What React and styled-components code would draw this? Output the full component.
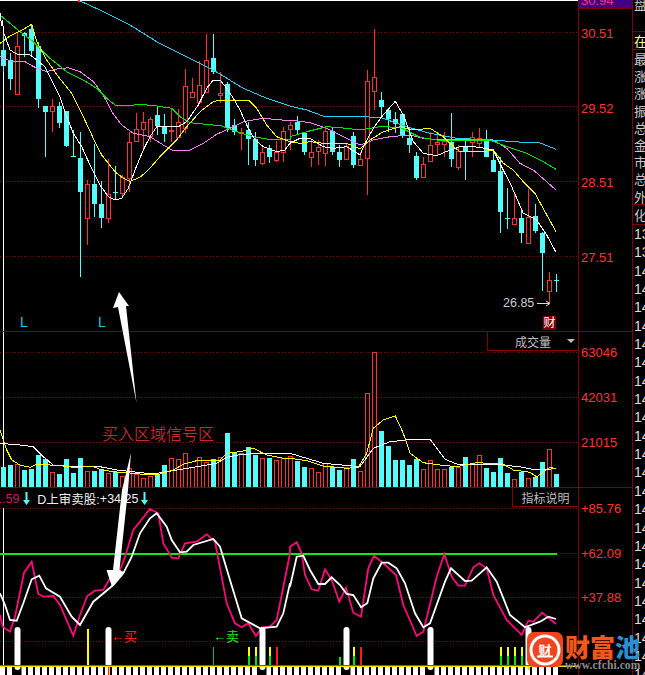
import React from "react";
import styled, { createGlobalStyle } from "styled-components";

const RED = "#ff3232";
const CYAN = "#54fcfc";
const GRID = "#8a0000";
const LINE = "#800000";

const Global = createGlobalStyle`
  html, body { margin: 0; padding: 0; background: #000; }
  #root { width: 645px; height: 675px; overflow: hidden; }
`;

const Terminal = styled.div`
  position: relative;
  display: flex;
  width: 645px;
  height: 675px;
  overflow: hidden;
  background: #000;
  font-family: "Liberation Sans", "Noto Sans CJK SC", sans-serif;
`;
const ChartColumn = styled.div`
  display: flex;
  flex-direction: column;
  width: 632px;
  flex: none;
`;
const Panel = styled.section`
  display: flex;
  flex: none;
  box-sizing: border-box;
  height: ${(p) => p.$height}px;
  border-bottom: ${(p) => (p.$last ? "none" : `1px solid ${LINE}`)};
`;
const Plot = styled.div`
  position: relative;
  width: 578px;
  flex: none;
  overflow: hidden;
`;
const PlotSvg = styled.svg`
  display: block;
  width: 578px;
  height: 100%;
`;
const Scale = styled.div`
  flex: 1;
  display: flex;
  flex-direction: column;
  border-left: 1px solid ${LINE};
  overflow: hidden;
`;
const TopPrice = styled.div`
  flex: none;
  height: 8px;
  padding-left: 2px;
  border-bottom: 1px solid ${LINE};
  background: #420080;
  color: #ff3080;
  font-size: 13px;
  line-height: 2px;
  overflow: hidden;
`;
const Ticks = styled.div`
  display: flex;
  flex-direction: column;
  gap: ${(p) => p.$gap}px;
  padding: ${(p) => p.$top}px 0 0 2px;
`;
const Tick = styled.span`
  height: 14px;
  color: ${RED};
  font-size: 13px;
  line-height: 14px;
  white-space: nowrap;
`;
const TabBox = styled.div`
  position: absolute;
  top: 0;
  right: 0;
  display: flex;
  align-items: center;
  justify-content: ${(p) => (p.$caret ? "flex-start" : "center")};
  box-sizing: border-box;
  width: ${(p) => p.$width}px;
  height: ${(p) => p.$height}px;
  padding-left: ${(p) => (p.$caret ? 27 : 0)}px;
  background: #000;
  border-left: 1px solid ${LINE};
  border-bottom: 1px solid ${LINE};
  color: #bdbdbd;
  font-size: 12px;
`;
const Caret = styled.i`
  position: absolute;
  right: 3px;
  top: 7px;
  border-left: 4px solid transparent;
  border-right: 4px solid transparent;
  border-top: 4px solid #bdbdbd;
`;
const LowMark = styled.span`
  position: absolute;
  top: 314px;
  left: ${(p) => p.$x}px;
  color: #14c8f0;
  font-size: 14px;
  line-height: 16px;
`;
const LowPrice = styled.span`
  position: absolute;
  top: 296px;
  left: 503px;
  color: #c4ccd4;
  font-size: 12.5px;
  line-height: 14px;
`;
const FinanceFlag = styled.span`
  position: absolute;
  top: 316px;
  left: 543px;
  width: 13px;
  height: 14px;
  background: #800000;
  color: #fff;
  font-size: 12px;
  line-height: 14px;
  text-align: center;
`;
const Legend = styled.div`
  position: absolute;
  top: 3px;
  left: -5px;
  display: flex;
  align-items: center;
  height: 15px;
  font-size: 12.5px;
  color: #f0f0f0;
  white-space: nowrap;
`;
const LegendValue = styled.span`
  color: ${(p) => p.$color || "#f0f0f0"};
  margin-left: ${(p) => p.$gap || 0}px;
`;
const DownArrow = styled.svg`
  width: 7px;
  height: 13px;
  flex: none;
  margin-left: ${(p) => p.$gap}px;
`;
const SignalLabel = styled.span`
  position: absolute;
  top: 141px;
  left: ${(p) => p.$x}px;
  color: ${(p) => p.$color};
  font-size: 13px;
  line-height: 16px;
  white-space: nowrap;
`;
const Side = styled.aside`
  flex: 1;
  display: flex;
  flex-direction: column;
  border-left: 1px solid ${LINE};
  overflow: hidden;
  color: #c8c8c8;
  font-family: "Noto Sans CJK SC", sans-serif;
  font-size: 13px;
`;
const SideTop = styled.div`
  flex: none;
  height: 31px;
  padding-left: 1px;
  line-height: 7px;
  border-bottom: 1px solid ${LINE};
  overflow: hidden;
`;
const SideActive = styled.div`
  flex: none;
  height: 17px;
  padding-left: 1px;
  color: #ffff90;
  line-height: 17px;
  border-bottom: 1px solid ${LINE};
`;
const SideStack = styled.div`
  flex: none;
  height: 155px;
  padding-left: 1px;
  box-sizing: border-box;
  border-bottom: 1px solid ${LINE};
`;
const SideChar = styled.div`
  height: 17.2px;
  line-height: 17.2px;
`;
const SideNote = styled.div`
  flex: none;
  height: 19px;
  padding-left: 1px;
  line-height: 19px;
  border-bottom: 1px solid ${LINE};
`;
const SideNumber = styled.div`
  flex: none;
  height: 18.35px;
  padding-left: 1px;
  font-family: "Liberation Sans", sans-serif;
  font-size: 14px;
  line-height: 18.35px;
  color: #dcdcdc;
`;
const Annotation = styled.svg`
  position: absolute;
  top: 0;
  left: 0;
  pointer-events: none;
`;
const AnnotationText = styled.span`
  position: absolute;
  top: 422px;
  left: 102px;
  color: #e83636;
  font-family: "Noto Sans CJK SC", sans-serif;
  font-size: 16px;
  font-weight: 300;
  line-height: 22px;
  white-space: nowrap;
`;
const Logo = styled.div`
  position: absolute;
  left: 527px;
  top: 632px;
  display: flex;
  gap: 2px;
`;
const LogoMark = styled.svg`
  width: 36px;
  height: 35px;
  flex: none;
`;
const LogoWords = styled.div`
  display: flex;
  flex-direction: column;
`;
const LogoName = styled.div`
  color: #f2581c;
  font-family: "Noto Sans CJK SC", sans-serif;
  font-size: 25px;
  font-weight: 900;
  line-height: 28px;
  white-space: nowrap;
`;
const LogoBlue = styled.span`
  color: #2a90d2;
`;
const LogoUrl = styled.div`
  color: #8c8c8c;
  font-family: "Liberation Serif", serif;
  font-size: 11.5px;
  font-weight: 700;
  line-height: 11px;
  letter-spacing: 0.1px;
  white-space: nowrap;
`;

/* ---------- data, measured in 3x crop units ---------- */
const candles = [
  [0,95,150,197,215],[0,160,180,236,270],[1,100,139,281,281],[0,95,100,107,170],[0,75,87,152,170],
  [0,125,138,296,325],[0,318,318,335,472],[1,297,319,334,395],[0,305,318,369,385],[0,333,333,437,440],
  [0,390,468,470,472],[0,396,475,575,830],[1,540,552,653,735],[0,432,552,612,650],[0,543,612,653,683],
  [1,478,583,653,668],[0,498,576,578,600],[1,525,531,578,595],[1,395,427,534,575],[1,340,386,424,425],
  [1,336,367,386,450],[1,350,358,407,425],[0,320,345,377,405],[0,342,379,402,425],[1,328,390,394,425],
  [1,328,367,410,410],[1,207,259,385,400],[1,235,277,292,293],[1,183,256,305,305],[1,102,181,277,278],
  [0,102,174,216,222],[1,217,280,286,310],[0,245,252,384,395],[0,357,375,395,405],[1,385,395,398,450],
  [0,365,390,417,495],[0,395,417,480,497],[1,435,456,488,495],[0,435,444,472,488],[1,422,456,480,487],
  [1,380,394,455,487],[1,365,375,388,450],[0,348,366,390,405],[0,395,400,456,465],[1,420,455,470,500],
  [1,420,442,452,495],[1,385,394,460,497],[0,385,392,456,465],[0,435,456,480,500],[1,428,438,478,480],
  [0,395,408,495,505],[1,455,478,495,495],[1,210,244,475,585],[1,88,232,272,330],[0,276,300,320,355],
  [0,325,330,357,395],[0,335,357,372,400],[0,342,342,408,415],[0,380,414,434,460],[0,455,468,535,540],
  [1,470,493,530,535],[1,395,436,482,485],[1,405,427,433,465],[1,395,422,433,470],[0,340,425,477,500],
  [1,435,452,500,510],[0,415,437,455,540],[1,397,412,427,470],[1,385,415,428,445],[0,390,420,470,470],
  [0,450,480,515,515],[0,470,513,635,698],[0,563,654,656,687],[1,576,655,673,673],[0,625,654,698,730],
  [1,568,650,730,730],[0,612,648,693,698],[0,695,698,760,872],[1,816,840,874,910],[0,822,841,843,875],
];

const mainLines = [
  { color: "#ff80ff", left: [[0,170],[30,183],[75,185],[110,205],[140,215],[170,207],[205,203],[240,215],[280,245],[310,285],[335,335],[365,375],[400,400],[450,410],[490,435],[520,452],[570,450],[610,430],[650,403],[690,385],[730,365],[790,355],[870,362]],
    right: [[0,360],[60,368],[110,385],[160,410],[210,435],[250,420],[300,410],[360,405],[400,415],[450,420],[540,417],[610,420],[650,445],[690,490],[730,510],[770,545],[798,570]] },
  { color: "#00e800", left: [[0,45],[30,70],[60,95],[100,125],[150,175],[200,215],[250,240],[290,265],[320,295],[345,315],[380,318],[420,313],[470,318],[515,325],[540,350],[570,368],[610,372],[665,378],[710,395],[760,410],[800,417],[870,417]],
    right: [[0,410],[50,395],[110,380],[170,385],[210,390],[270,380],[330,382],[390,412],[440,420],[500,420],[600,420],[650,440],[710,460],[760,485],[798,508]] },
  { color: "#20d0f0", left: [[240,3],[300,30],[390,75],[470,125],[560,170],[640,210],[730,265],[800,295],[870,318]],
    right: [[0,318],[50,330],[105,350],[200,350],[270,352],[350,380],[420,400],[500,415],[600,420],[700,427],[745,427],[798,448]] },
  { color: "#ffff00", left: [[0,130],[30,108],[70,88],[95,73],[110,125],[140,180],[175,230],[215,280],[250,350],[280,415],[305,465],[345,515],[370,535],[390,544],[420,532],[445,510],[480,470],[530,420],[560,380],[600,335],[640,305],[660,300],[745,300],[770,325],[800,375],[830,410],[870,425]],
    right: [[0,425],[30,430],[60,425],[100,430],[170,430],[210,447],[240,420],[280,395],[330,380],[370,390],[420,385],[460,410],[490,440],[510,455],[580,455],[610,450],[640,490],[670,510],[700,545],[735,580],[765,635],[798,695]] },
  { color: "#ffffff", left: [[0,40],[5,78],[8,60],[10,95],[30,150],[50,162],[90,165],[110,180],[135,200],[160,250],[180,290],[200,350],[220,400],[245,440],[270,495],[300,555],[325,590],[345,600],[365,595],[385,565],[405,510],[430,450],[450,410],[470,380],[535,380],[560,365],[595,315],[620,265],[640,240],[660,240],[680,265],[700,295],[720,330],[745,385],[765,420],[790,440],[830,455],[855,450],[870,430]],
    right: [[0,430],[30,415],[60,415],[100,440],[130,445],[170,440],[210,465],[225,430],[250,385],[275,350],[316,304],[340,345],[370,425],[400,460],[440,467],[480,450],[510,440],[550,440],[585,445],[610,450],[640,510],[665,560],[700,640],[740,660],[770,705],[798,757]] },
];

const volumes = [
  [0,351],[0,345],[1,342],[0,360],[0,358],[0,316],[0,328],[1,367],[0,372],[0,327],
  [0,369],[0,323],[1,363],[0,363],[0,358],[1,370],[0,365],[1,378],[1,355],[1,372],
  [1,385],[1,378],[0,375],[0,345],[1,325],[1,328],[1,310],[1,350],[1,320],[1,335],
  [0,328],[1,322],[0,250],[0,306],[1,308],[0,291],[0,315],[1,325],[0,325],[1,330],
  [1,325],[1,317],[0,333],[0,351],[1,355],[1,367],[1,340],[0,352],[0,360],[1,352],
  [0,327],[1,364],[1,130],[1,7],[0,243],[0,288],[0,330],[0,330],[0,345],[0,327],
  [1,358],[1,331],[1,358],[1,358],[0,350],[1,350],[0,321],[1,343],[1,316],[0,354],
  [0,366],[0,324],[0,369],[1,388],[0,365],[1,385],[0,380],[0,336],[1,298],[0,372],
];

const volLines = [
  { color: "#ffffff", left: [[0,280],[60,285],[100,290],[130,320],[160,345],[220,350],[300,350],[350,360],[460,372],[520,362],[590,350],[650,340],[680,322],[720,314],[780,310],[870,310]],
    right: [[0,310],[50,325],[100,340],[180,347],[210,350],[250,295],[300,275],[370,268],[420,268],[465,328],[500,342],[640,345],[700,352],[735,360],[798,356]] },
  { color: "#ffff00", left: [[0,240],[10,270],[20,300],[35,330],[60,345],[90,352],[110,343],[150,345],[180,347],[220,352],[280,350],[300,358],[340,365],[400,370],[440,374],[480,372],[520,360],[550,343],[590,332],[660,330],[680,310],[720,305],[760,295],[780,305],[800,315],[850,325],[870,325]],
    right: [[0,325],[50,332],[100,348],[170,355],[205,352],[230,310],[250,235],[280,210],[316,198],[340,250],[360,310],[400,338],[450,345],[500,350],[560,338],[640,342],[670,360],[720,367],[740,380],[780,352],[798,357]] },
];

const kLine = {
  left: [[0,375],[8,410],[30,425],[45,380],[72,248],[95,215],[115,312],[130,320],[160,318],[180,345],[220,437],[240,375],[262,318],[285,302],[310,300],[330,265],[360,240],[375,200],[400,120],[450,57],[475,70],[490,160],[515,203],[535,205],[555,160],[590,155],[620,133],[645,155],[680,340],[705,400],[725,412],[745,400],[768,438],[785,412],[810,410],[830,390],[870,190]],
  right: [[0,170],[20,157],[35,190],[45,255],[65,298],[85,302],[105,238],[125,270],[148,335],[168,293],[190,368],[213,380],[235,235],[252,197],[280,220],[318,255],[340,345],[380,438],[400,425],[440,260],[463,192],[485,260],[505,287],[525,287],[550,232],[568,220],[590,235],[610,315],[650,390],[695,435],[715,392],[730,395],[757,368],[798,402]],
};
const dLine = {
  left: [[0,310],[15,345],[30,390],[50,392],[70,340],[95,268],[118,257],[138,295],[180,320],[215,380],[240,405],[280,335],[340,285],[370,250],[395,200],[420,130],[450,85],[470,70],[500,110],[515,150],[540,187],[560,185],[580,165],[640,147],[660,170],[690,270],[725,385],[780,415],[830,410],[850,370],[870,280]],
  right: [[0,290],[20,200],[40,197],[60,240],[85,282],[105,282],[125,262],[150,285],[170,312],[190,315],[213,352],[232,340],[250,265],[275,218],[295,218],[320,235],[345,280],[375,370],[400,412],[420,400],[465,275],[483,235],[525,273],[545,272],[590,232],[620,275],[660,375],[705,412],[750,395],[775,380],[798,387]],
};

const whiteSignals = [2, 15, 37, 49, 61, 75];
const yellowGreen = [35, 36, 38, 50, 71, 72, 73, 74];
const redSignals = [39, 51];
const darkNotches = [2, 37, 49, 61];

const cx = (i) => 3.5 + 7 * i;
const points = ({ left, right }, base) =>
  [...left.map(([x, y]) => [x / 3, base + y / 3]), ...right.map(([x, y]) => [290 + x / 3, base + y / 3])]
    .map(([x, y]) => `${x.toFixed(1)},${y.toFixed(1)}`)
    .join(" ");

const GridLines = ({ ys }) =>
  ys.map((y) => (
    <line key={y} x1="0" x2="578" y1={y + 0.5} y2={y + 0.5} stroke={GRID} strokeDasharray="1 2" shapeRendering="crispEdges" />
  ));

const Cursor = ({ from, to }) => <line x1="3.5" x2="3.5" y1={from} y2={to} stroke="#fff" shapeRendering="crispEdges" />;

const Candle = ({ i, data: [up, wt, bt, bb, wb] }) => {
  const x = cx(i);
  const color = up ? RED : CYAN;
  const top = Math.round(bt / 3);
  const bottom = Math.max(Math.round(bb / 3), top + 1);
  return (
    <g shapeRendering="crispEdges">
      <line x1={x} x2={x} y1={wt / 3} y2={wb / 3} stroke={color} />
      {up ? (
        <rect x={x - 2} y={top + 0.5} width="4" height={bottom - top} fill="#000" stroke={color} />
      ) : (
        <rect x={x - 2.5} y={top} width="5" height={bottom - top} fill={color} />
      )}
    </g>
  );
};

const PriceChart = () => (
  <PlotSvg viewBox="0 0 578 331">
    <line x1="0" x2="578" y1="0.5" y2="0.5" stroke="#fff" shapeRendering="crispEdges" />
    <GridLines ys={[32, 106, 181, 256]} />
    <Cursor from={32} to={331} />
    {candles.map((c, i) => (
      <Candle key={i} i={i} data={c} />
    ))}
    {mainLines.map((l) => (
      <polyline key={l.color} points={points(l, 0)} fill="none" stroke={l.color} shapeRendering="crispEdges" />
    ))}
    <rect x="78" y="0" width="2" height="2" fill={RED} />
    <path d="M537 303.5H549M546 301l4 2.5-4 2.5" fill="none" stroke="#d8d8d8" />
  </PlotSvg>
);

const VolumeChart = () => (
  <PlotSvg viewBox="0 332 578 155">
    <GridLines ys={[352, 397, 442]} />
    <Cursor from={332} to={487} />
    {volumes.map(([up, top], i) => {
      const y = Math.round(350 + top / 3);
      return up ? (
        <rect key={i} x={cx(i) - 2} y={y + 0.5} width="4" height={487 - y} fill="#000" stroke={RED} shapeRendering="crispEdges" />
      ) : (
        <rect key={i} x={cx(i) - 2.5} y={y} width="5" height={487 - y} fill={CYAN} shapeRendering="crispEdges" />
      );
    })}
    {volLines.map((l) => (
      <polyline key={l.color} points={points(l, 350)} fill="none" stroke={l.color} shapeRendering="crispEdges" />
    ))}
  </PlotSvg>
);

const IndicatorChart = () => (
  <PlotSvg viewBox="0 488 578 187">
    <GridLines ys={[508, 597, 641]} />
    <line x1="557" x2="578" y1="553.5" y2="553.5" stroke={GRID} strokeDasharray="1 2" shapeRendering="crispEdges" />
    <Cursor from={508} to={665} />
    <rect x="0" y="553" width="557" height="2" fill="#12e812" />
    <polyline points={points(kLine, 490)} fill="none" stroke="#ff0a7c" strokeWidth="1.8" />
    <polyline points={points(dLine, 490)} fill="none" stroke="#fff" strokeWidth="1.8" />
    <g shapeRendering="crispEdges">
      {yellowGreen.map((i) => (
        <g key={i}>
          <rect x={cx(i) - 1} y="647" width="2" height="9" fill="#ffff00" />
          <rect x={cx(i) - 1} y="656" width="2" height="9" fill="#00e800" />
        </g>
      ))}
      {redSignals.map((i) => (
        <rect key={i} x={cx(i) - 1} y="647" width="2" height="18" fill="#ff1a1a" />
      ))}
      <rect x={cx(12) - 1} y="629" width="2" height="36" fill="#ffff00" />
      <rect x="213" y="647" width="1" height="18" fill="#00c800" />
      <rect x={cx(48) - 1} y="657" width="2" height="8" fill="#00e800" />
    </g>
    {whiteSignals.map((i) => (
      <rect key={i} x={cx(i) - 3} y="627" width="6" height="40" rx="3" fill="#fff" />
    ))}
    <g shapeRendering="crispEdges">
      {Array.from({ length: 80 }, (_, i) => (
        <rect key={i} x={7 * i} y="667" width="5" height="8" fill="#fff" />
      ))}
      <rect x="0" y="665" width="578" height="1" fill="#ff2a00" />
      <rect x="0" y="666" width="578" height="1" fill="#ffe000" />
      <rect x={cx(15) - 1} y="667" width="1" height="8" fill="#ff2a00" />
      <rect x={cx(15)} y="667" width="1" height="8" fill="#ffe000" />
      <rect x={cx(75) - 1} y="667" width="2" height="3" fill="#ffe000" />
    </g>
    {darkNotches.map((i) => (
      <g key={i}>
        <rect x={cx(i) - 4} y="667" width="8" height="8" fill="#000" />
        <path d={`M${cx(i) - 3} 667h6a3 3 0 0 1-6 0z`} fill="#fff" />
      </g>
    ))}
  </PlotSvg>
);

const LegendArrow = ({ gap }) => (
  <DownArrow viewBox="0 0 7 13" $gap={gap}>
    <path d="M2.5 0h2v8H7L3.5 13 0 8h2.5z" fill={CYAN} />
  </DownArrow>
);

const sideChars = ["最", "涨", "涨", "振", "总", "金", "市", "总", "外"];
const sideNumbers = Array.from({ length: 25 }, (_, i) => (i < 2 ? "13" : "14"));

export default function App() {
  return (
    <Terminal>
      <Global />
      <ChartColumn>
        <Panel $height={332}>
          <Plot>
            <PriceChart />
            <LowMark $x={20}>L</LowMark>
            <LowMark $x={98}>L</LowMark>
            <LowPrice>26.85</LowPrice>
            <FinanceFlag>财</FinanceFlag>
          </Plot>
          <Scale>
            <TopPrice>30.94</TopPrice>
            <Ticks $top={18} $gap={60.5}>
              <Tick>30.51</Tick>
              <Tick>29.52</Tick>
              <Tick>28.51</Tick>
              <Tick>27.51</Tick>
            </Ticks>
          </Scale>
        </Panel>
        <Panel $height={156}>
          <Plot>
            <VolumeChart />
            <TabBox $width={91} $height={19} $caret>
              成交量
              <Caret />
            </TabBox>
          </Plot>
          <Scale>
            <Ticks $top={14} $gap={31}>
              <Tick>63046</Tick>
              <Tick>42031</Tick>
              <Tick>21015</Tick>
            </Ticks>
          </Scale>
        </Panel>
        <Panel $height={187} $last>
          <Plot>
            <IndicatorChart />
            <Legend>
              <LegendValue $color="#d8105c">1.59</LegendValue>
              <LegendArrow gap={4} />
              <LegendValue $gap={7}>D上审卖股:</LegendValue>
              <LegendValue $gap={0}>+34.25</LegendValue>
              <LegendArrow gap={3} />
            </Legend>
            <TabBox $width={66} $height={19}>
              指标说明
            </TabBox>
            <SignalLabel $x={111} $color="#ff2020">←买</SignalLabel>
            <SignalLabel $x={213} $color="#20e820">←卖</SignalLabel>
          </Plot>
          <Scale>
            <Ticks $top={14} $gap={30.5}>
              <Tick>+85.76</Tick>
              <Tick>+62.09</Tick>
              <Tick>+37.88</Tick>
            </Ticks>
          </Scale>
        </Panel>
      </ChartColumn>
      <Side>
        <SideTop>盘</SideTop>
        <SideActive>在</SideActive>
        <SideStack>
          {sideChars.map((c, i) => (
            <SideChar key={i}>{c}</SideChar>
          ))}
        </SideStack>
        <SideNote>化</SideNote>
        {sideNumbers.map((n, i) => (
          <SideNumber key={i}>{n}</SideNumber>
        ))}
      </Side>
      <Annotation width="645" height="675" viewBox="0 0 645 675">
        <polygon points="119,292 129,306 126,306 136.5,403 118,307 113,308" fill="#fff" />
        <polygon points="131,453 128,490 119.5,570 124,572 112,587 106.5,570 113,570 122,490" fill="#fff" />
      </Annotation>
      <AnnotationText>买入区域信号区</AnnotationText>
      <Logo>
        <LogoMark viewBox="0 0 36 35">
          <rect width="36" height="35" rx="7" fill="#f2451f" />
          <circle cx="18" cy="18" r="14" fill="none" stroke="#fff" strokeWidth="3" />
          <path d="M10 24.5h16" stroke="#fff" strokeWidth="2" />
          <text x="18" y="23" textAnchor="middle" fontSize="13" fontFamily="Noto Sans CJK SC" fontWeight="700" fill="#fff">财</text>
        </LogoMark>
        <LogoWords>
          <LogoName>
            财富<LogoBlue>池</LogoBlue>
          </LogoName>
          <LogoUrl>www.cfchi.com</LogoUrl>
        </LogoWords>
      </Logo>
    </Terminal>
  );
}
